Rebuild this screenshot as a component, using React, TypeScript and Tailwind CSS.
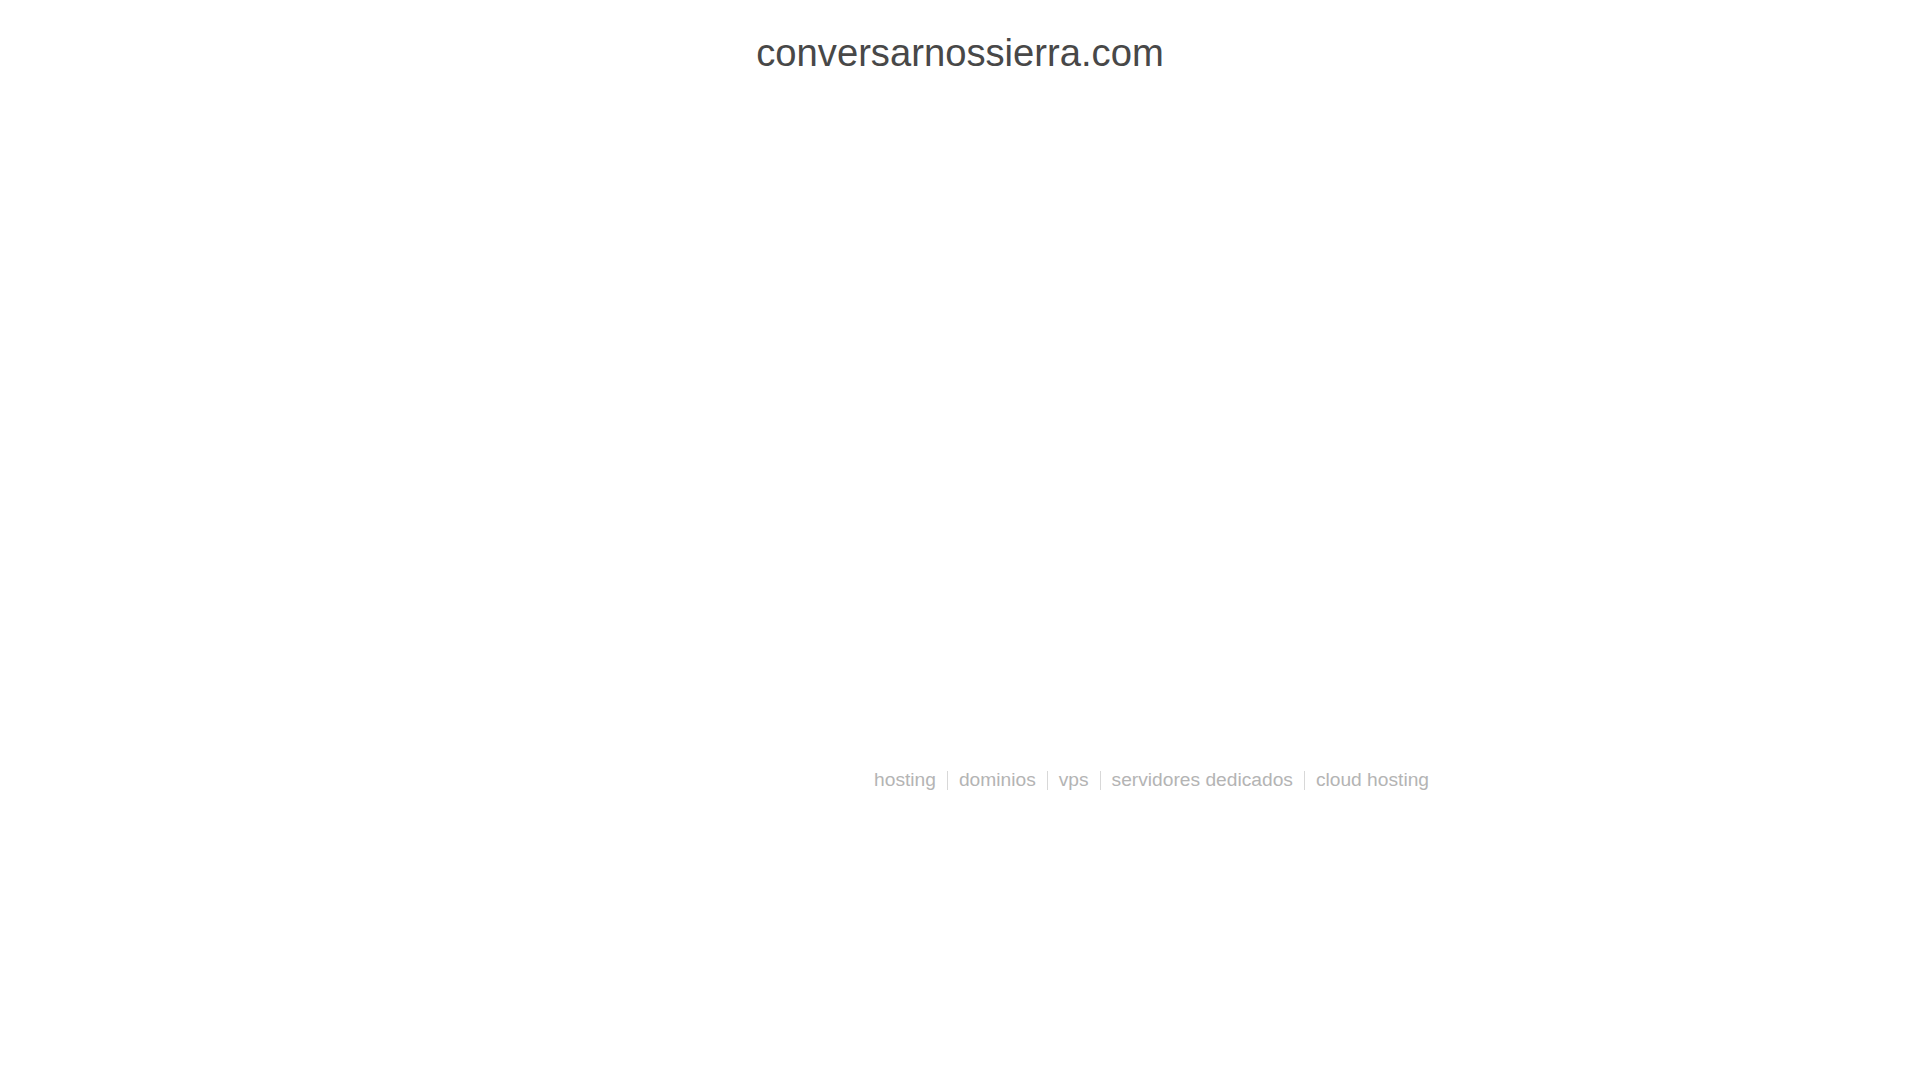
import React from "react";

const links = ["hosting", "dominios", "vps", "servidores dedicados", "cloud hosting"];

export default function App() {
  return (
    <div className="min-h-screen bg-white" style={{ fontFamily: '"Liberation Sans", Arial, sans-serif' }}>
      <div className="pt-[31px] text-center">
        <h1 className="text-[38.2px] leading-[44px] font-normal text-[#484848]">conversarnossierra.com</h1>
      </div>
      <div className="mx-auto mt-[694px] w-[960px] px-[11px] flex justify-end">
        <div className="flex items-center text-[19.2px] leading-[22px] text-[#b4b4b4]">
          {links.map((l, i) => (
            <React.Fragment key={l}>
              {i > 0 && <span className="mx-[11px] h-[19px] w-px bg-[#d8d8d8]" />}
              <a href="#" className="text-[#b4b4b4]">{l}</a>
            </React.Fragment>
          ))}
        </div>
      </div>
    </div>
  );
}
